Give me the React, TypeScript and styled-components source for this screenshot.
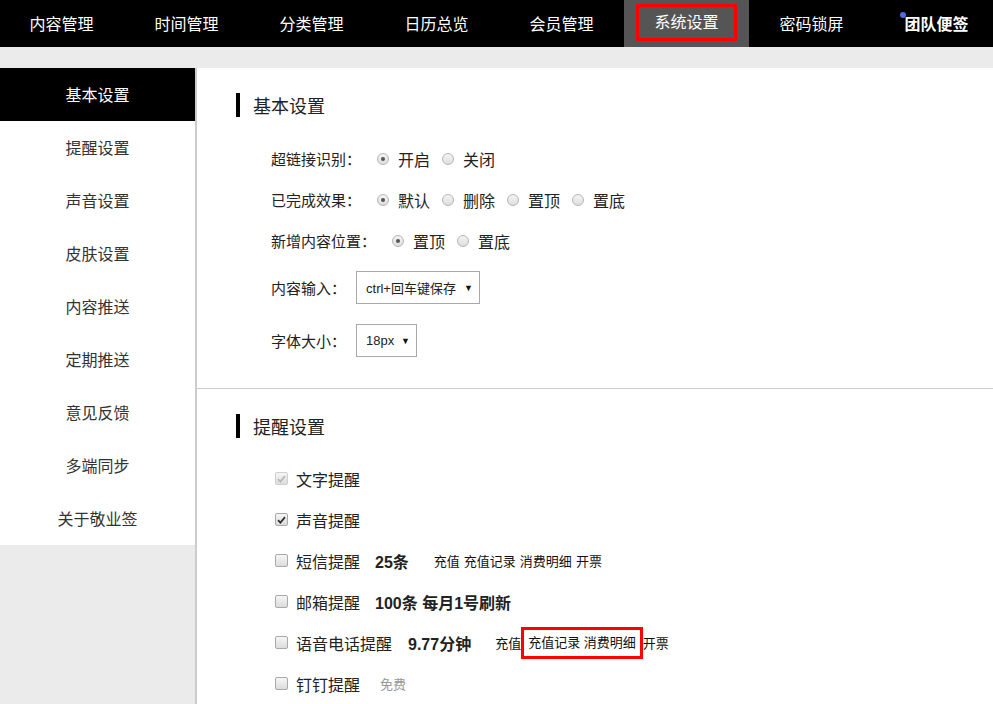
import styled, { createGlobalStyle } from 'styled-components'

const GlobalStyle = createGlobalStyle`
  html, body {
    margin: 0;
    padding: 0;
    background: #ebebeb;
    font-family: "Liberation Sans", "Noto Sans CJK SC", sans-serif;
    color: #222;
  }
`

const navItems = ['内容管理', '时间管理', '分类管理', '日历总览', '会员管理', '系统设置', '密码锁屏', '团队便签']
const sideItems = ['基本设置', '提醒设置', '声音设置', '皮肤设置', '内容推送', '定期推送', '意见反馈', '多端同步', '关于敬业签']

const Page = styled.div`
  width: 993px;
  height: 704px;
  overflow: hidden;
  display: flex;
  flex-direction: column;
`

const TopNav = styled.div`
  height: 47px;
  background: #000;
  display: flex;
  margin-left: -1px;
  flex-shrink: 0;
`

const NavItem = styled.div<{ $active?: boolean; $bold?: boolean }>`
  width: 125px;
  flex-shrink: 0;
  display: flex;
  align-items: center;
  justify-content: center;
  position: relative;
  color: #fff;
  font-size: 16px;
  padding-bottom: 2px;
  box-sizing: border-box;
  font-weight: ${(p) => (p.$bold ? 700 : 400)};
  background: ${(p) => (p.$active ? '#555' : 'transparent')};
`

const NavMark = styled.span`
  border: 3px solid #f00;
  padding: 0 15px;
  line-height: 31px;
`

const Dot = styled.span`
  position: absolute;
  left: 26px;
  top: 12px;
  width: 6px;
  height: 6px;
  border-radius: 50%;
  background: #5068e0;
`

const Band = styled.div`
  height: 21px;
  background: #ebebeb;
  flex-shrink: 0;
`

const Body = styled.div`
  flex: 1;
  display: flex;
  min-height: 0;
`

const Sidebar = styled.div`
  width: 195px;
  flex-shrink: 0;
  align-self: flex-start;
  background: #fff;
`

const SideItem = styled.div<{ $active?: boolean }>`
  height: 53px;
  display: flex;
  align-items: center;
  justify-content: center;
  padding-bottom: 2px;
  box-sizing: border-box;
  font-size: 16px;
  color: ${(p) => (p.$active ? '#fff' : '#333')};
  background: ${(p) => (p.$active ? '#000' : '#fff')};
`

const Content = styled.div`
  flex: 1;
  background: #fff;
  border-left: 2px solid #ccc;
`

const Section = styled.div<{ $divider?: boolean }>`
  padding: 25px 0 21px 39px;
  border-bottom: ${(p) => (p.$divider ? '1px solid #ccc' : 'none')};
`

const Title = styled.div`
  height: 24px;
  display: flex;
  align-items: center;
  margin-bottom: 21px;
  font-size: 18px;
  color: #222;
  &::before {
    content: '';
    width: 4px;
    height: 24px;
    background: #000;
    margin-right: 13px;
  }
`

const Row = styled.div<{ $tall?: boolean }>`
  height: ${(p) => (p.$tall ? 53 : 41)}px;
  display: flex;
  align-items: center;
`

const Label = styled.span`
  font-size: 15px;
  padding-left: 35px;
  margin-right: 16px;
  color: #222;
`

const SelectLabel = styled(Label)`
  margin-right: 10px;
`

const RadioItem = styled.span`
  display: inline-flex;
  align-items: center;
  font-size: 16px;
  margin-right: 12px;
`

const RadioDot = styled.span<{ $on?: boolean }>`
  width: 10px;
  height: 10px;
  border-radius: 50%;
  border: 1px solid #b5b5b5;
  background: linear-gradient(#f4f4f4, #dedede);
  margin-right: 9px;
  display: inline-flex;
  align-items: center;
  justify-content: center;
  &::after {
    content: '';
    width: 4px;
    height: 4px;
    border-radius: 50%;
    background: ${(p) => (p.$on ? '#555' : 'transparent')};
  }
`

const Select = styled.div<{ $w: number }>`
  width: ${(p) => p.$w}px;
  height: 33px;
  box-sizing: border-box;
  border: 1px solid #a9a9a9;
  display: flex;
  align-items: center;
  justify-content: space-between;
  padding: 0 6px 0 9px;
  font-size: 13px;
  color: #222;
  &::after {
    content: '▼';
    font-size: 9px;
    color: #111;
  }
`

const CheckRow = styled(Row)`
  padding-left: 39px;
  padding-bottom: 2px;
  box-sizing: border-box;
  font-size: 16px;
`

const Box = styled.span<{ $on?: boolean; $disabled?: boolean }>`
  width: 11px;
  height: 11px;
  border: 1px solid ${(p) => (p.$disabled ? '#cfcfcf' : '#a9a9a9')};
  border-radius: 2px;
  background: linear-gradient(#f6f6f6, #dcdcdc);
  margin-right: 8px;
  display: inline-flex;
  align-items: center;
  justify-content: center;
  svg {
    display: ${(p) => (p.$on ? 'block' : 'none')};
  }
`

const Strong = styled.span<{ $gap: number }>`
  font-weight: 700;
  margin-left: ${(p) => p.$gap}px;
`

const Links = styled.span<{ $gap: number }>`
  font-size: 13px;
  margin-left: ${(p) => p.$gap}px;
  color: #111;
  display: inline-flex;
  align-items: center;
  gap: 4px;
`

const Marked = styled.span`
  border: 3px solid #f00;
  padding: 4px 4px;
  margin: 0 -4px;
  line-height: 18px;
`

const Free = styled.span`
  font-size: 13px;
  color: #999;
  margin-left: 20px;
`

const Check = ({ on, disabled }: { on?: boolean; disabled?: boolean }) => (
  <Box $on={on} $disabled={disabled}>
    <svg width="9" height="8" viewBox="0 0 9 8">
      <path d="M1 4.2 L3.4 6.6 L8 1.2" fill="none" stroke={disabled ? '#b8b8b8' : '#333'} strokeWidth="1.8" />
    </svg>
  </Box>
)

const Radio = ({ on, text }: { on?: boolean; text: string }) => (
  <RadioItem>
    <RadioDot $on={on} />
    {text}
  </RadioItem>
)

export default function App() {
  return (
    <Page>
      <GlobalStyle />
      <TopNav>
        {navItems.map((n, i) => (
          <NavItem key={n} $active={i === 5} $bold={i === 7}>
            {i === 5 ? <NavMark>{n}</NavMark> : n}
            {i === 7 && <Dot />}
          </NavItem>
        ))}
      </TopNav>
      <Band />
      <Body>
        <Sidebar>
          {sideItems.map((s, i) => (
            <SideItem key={s} $active={i === 0}>
              {s}
            </SideItem>
          ))}
        </Sidebar>
        <Content>
          <Section $divider>
            <Title>基本设置</Title>
            <Row>
              <Label>超链接识别：</Label>
              <Radio on text="开启" />
              <Radio text="关闭" />
            </Row>
            <Row>
              <Label>已完成效果：</Label>
              <Radio on text="默认" />
              <Radio text="删除" />
              <Radio text="置顶" />
              <Radio text="置底" />
            </Row>
            <Row>
              <Label>新增内容位置：</Label>
              <Radio on text="置顶" />
              <Radio text="置底" />
            </Row>
            <Row $tall>
              <SelectLabel>内容输入：</SelectLabel>
              <Select $w={124}>ctrl+回车键保存</Select>
            </Row>
            <Row $tall>
              <SelectLabel>字体大小：</SelectLabel>
              <Select $w={61}>18px</Select>
            </Row>
          </Section>
          <Section>
            <Title>提醒设置</Title>
            <CheckRow>
              <Check on disabled />
              文字提醒
            </CheckRow>
            <CheckRow>
              <Check on />
              声音提醒
            </CheckRow>
            <CheckRow>
              <Check />
              短信提醒
              <Strong $gap={15}>25条</Strong>
              <Links $gap={25}>
                <span>充值</span>
                <span>充值记录</span>
                <span>消费明细</span>
                <span>开票</span>
              </Links>
            </CheckRow>
            <CheckRow>
              <Check />
              邮箱提醒
              <Strong $gap={15}>100条 每月1号刷新</Strong>
            </CheckRow>
            <CheckRow>
              <Check />
              语音电话提醒
              <Strong $gap={16}>9.77分钟</Strong>
              <Links $gap={24}>
                <span>充值</span>
                <Marked>充值记录 消费明细</Marked>
                <span>开票</span>
              </Links>
            </CheckRow>
            <CheckRow>
              <Check />
              钉钉提醒
              <Free>免费</Free>
            </CheckRow>
          </Section>
        </Content>
      </Body>
    </Page>
  )
}
